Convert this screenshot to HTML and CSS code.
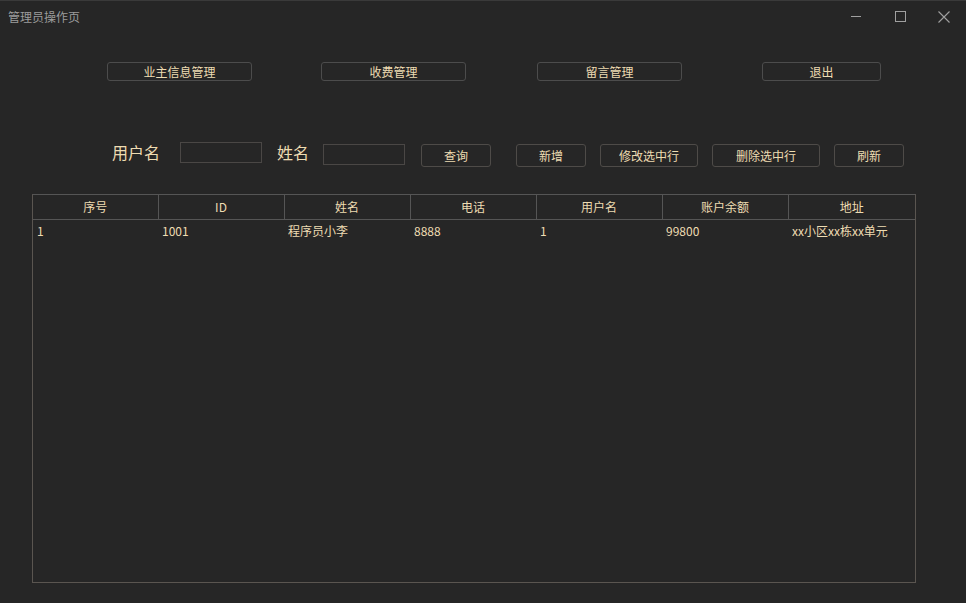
FILE: index.html
```html
<!DOCTYPE html>
<html lang="zh">
<head>
<meta charset="utf-8">
<title>管理员操作页</title>
<link rel="stylesheet" href="styles.css">
</head>
<body>
<div class="window">
  <div class="titlebar">
    <span class="title">管理员操作页</span>
    <div class="controls">
      <svg class="ctl" width="44" height="32" viewBox="0 0 44 32"><line x1="17" y1="15.5" x2="27" y2="15.5" stroke="#a0a0a0" stroke-width="1"/></svg>
      <svg class="ctl" width="44" height="32" viewBox="0 0 44 32"><rect x="17.5" y="10.5" width="10" height="10" fill="none" stroke="#a0a0a0" stroke-width="1"/></svg>
      <svg class="ctl" width="44" height="32" viewBox="0 0 44 32"><path d="M16.5 10.5 L27.5 21.5 M27.5 10.5 L16.5 21.5" stroke="#a0a0a0" stroke-width="1.1"/></svg>
    </div>
  </div>
  <div class="nav">
    <button class="btn nav-owner">业主信息管理</button>
    <button class="btn nav-fee">收费管理</button>
    <button class="btn nav-msg">留言管理</button>
    <button class="btn nav-exit">退出</button>
  </div>
  <div class="search">
    <span class="label lbl-user">用户名</span>
    <input class="field f-user" type="text">
    <span class="label lbl-name">姓名</span>
    <input class="field f-name" type="text">
    <button class="btn act b-query">查询</button>
    <button class="btn act b-add">新增</button>
    <button class="btn act b-edit">修改选中行</button>
    <button class="btn act b-del">删除选中行</button>
    <button class="btn act b-ref">刷新</button>
  </div>
  <div class="grid">
    <table>
      <colgroup>
        <col class="c-first"><col class="c"><col class="c"><col class="c"><col class="c"><col class="c"><col class="c-last">
      </colgroup>
      <thead>
        <tr><th>序号</th><th>ID</th><th>姓名</th><th>电话</th><th>用户名</th><th>账户余额</th><th>地址</th></tr>
      </thead>
      <tbody>
        <tr><td>1</td><td>1001</td><td>程序员小李</td><td>8888</td><td>1</td><td>99800</td><td>xx小区xx栋xx单元</td></tr>
      </tbody>
    </table>
  </div>
</div>
</body>
</html>
```
FILE: styles.css
```css
html, body {
  margin: 0;
  padding: 0;
  background: #262626;
}
body {
  font-family: "Noto Sans CJK SC", "Noto Sans", sans-serif;
  color: #eedcb2;
  width: 966px;
  height: 603px;
  overflow: hidden;
}
.window {
  border-top: 1px solid #3a3a3a;
  height: 602px;
  box-sizing: border-box;
}
.titlebar {
  height: 31px;
  display: flex;
  align-items: center;
  justify-content: space-between;
}
.title {
  margin-left: 8px;
  font-size: 12px;
  color: #9c9c9c;
  margin-top: -1px;
}
.controls {
  display: flex;
}
.ctl { display: block; }

.btn {
  font-family: "Noto Sans CJK SC", "Noto Sans", sans-serif;
  background: #262626;
  color: #eedcb2;
  border: 1px solid #4c4c4c;
  border-radius: 3px;
  font-size: 12px;
  padding: 0;
  line-height: 1;
  box-sizing: border-box;
}
.nav {
  display: flex;
  margin-top: 30px;
  height: 19px;
}
.nav .btn { height: 19px; width: 145px; }
.nav-owner { margin-left: 107px; }
.nav-fee { margin-left: 69px; }
.nav-msg { margin-left: 71px; }
.nav .nav-exit { margin-left: 80px; width: 119px; }

.search {
  display: flex;
  align-items: flex-start;
  margin-top: 61px;
  height: 24px;
}
.label {
  font-size: 16px;
  line-height: 21px;
}
.lbl-user { margin-left: 112px; }
.lbl-name { margin-left: 15px; }
.field {
  background: #262626;
  border: 1px solid #4a4745;
  box-sizing: border-box;
  height: 21px;
  width: 82px;
  padding: 0;
  margin: 0;
  outline: none;
}
.f-user { margin-left: 20px; }
.f-name { margin-left: 14px; margin-top: 2px; }
.act { height: 23px; width: 70px; margin-top: 2px; border-color: #4e4b48; }
.b-query { margin-left: 16px; }
.b-add { margin-left: 25px; }
.b-edit { margin-left: 14px; width: 98px; }
.b-del { margin-left: 14px; width: 108px; }
.b-ref { margin-left: 14px; }

.grid {
  margin-top: 28px;
  margin-left: 32px;
  width: 884px;
  height: 389px;
  border: 1px solid #5a5550;
  border-top-color: #555;
  box-sizing: border-box;
  overflow: hidden;
}
table {
  border-collapse: collapse;
  width: 882px;
  table-layout: fixed;
  font-size: 12px;
}
col.c-first { width: 125px; }
col.c { width: 126px; }
col.c-last { width: 127px; }
th {
  font-weight: normal;
  height: 24px;
  padding: 0;
  border-bottom: 1px solid #555;
  border-right: 1px solid #555;
  text-align: center;
  line-height: 24px;
}
th:last-child { border-right: none; }
td {
  padding: 0 0 0 4px;
  height: 22px;
  line-height: 22px;
  text-align: left;
  white-space: nowrap;
}
```
